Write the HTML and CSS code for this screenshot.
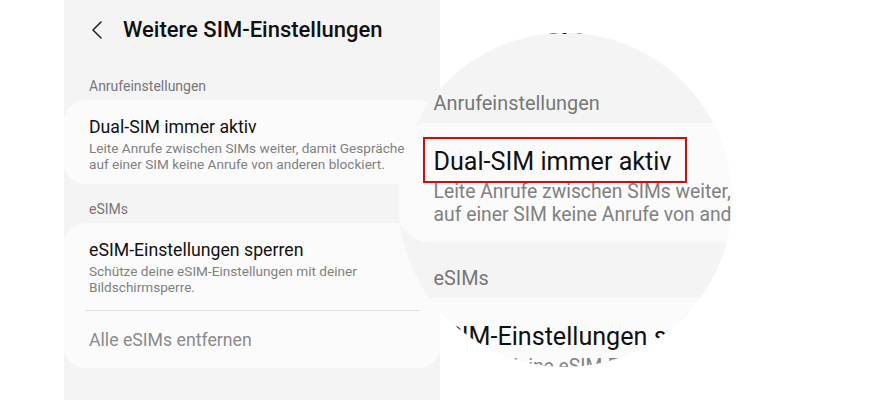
FILE: index.html
```html
<!DOCTYPE html>
<html lang="de">
<head>
<meta charset="utf-8">
<title>Weitere SIM-Einstellungen</title>
<link rel="stylesheet" href="styles.css">
</head>
<body>
<div class="stage">
  <div class="panel">
    <header class="appbar">
      <svg class="back" width="12" height="18" viewBox="0 0 12 18"><path d="M10 1 L2 9 L10 17" fill="none" stroke="#222" stroke-width="1.6" stroke-linecap="round" stroke-linejoin="round"/></svg>
      <h1 class="title">Weitere SIM-Einstellungen</h1>
    </header>
    <div class="section-label">Anrufeinstellungen</div>
    <div class="card">
      <div class="item">
        <div class="item-title">Dual-SIM immer aktiv</div>
        <div class="item-sub">Leite Anrufe zwischen SIMs weiter, damit Gespräche<br>auf einer SIM keine Anrufe von anderen blockiert.</div>
      </div>
    </div>
    <div class="section-label second">eSIMs</div>
    <div class="card">
      <div class="item item-divided">
        <div class="item-title">eSIM-Einstellungen sperren</div>
        <div class="item-sub">Schütze deine eSIM-Einstellungen mit deiner<br>Bildschirmsperre.</div>
      </div>
      <div class="divider"></div>
      <div class="item item-last">
        <div class="item-title disabled">Alle eSIMs entfernen</div>
      </div>
    </div>
  </div>

  <div class="magnifier" aria-hidden="true">
    <div class="panel zoomed">
      <header class="appbar">
        <svg class="back" width="12" height="18" viewBox="0 0 12 18"><path d="M10 1 L2 9 L10 17" fill="none" stroke="#222" stroke-width="1.6" stroke-linecap="round" stroke-linejoin="round"/></svg>
        <div class="title">Weitere SIM-Einstellungen</div>
      </header>
      <div class="section-label">Anrufeinstellungen</div>
      <div class="card">
        <div class="item">
          <div class="item-title">Dual-SIM immer aktiv</div>
          <div class="item-sub">Leite Anrufe zwischen SIMs weiter, damit Gespräche<br>auf einer SIM keine Anrufe von anderen blockiert.</div>
        </div>
      </div>
      <div class="section-label second">eSIMs</div>
      <div class="card">
        <div class="item item-divided">
          <div class="item-title">eSIM-Einstellungen sperren</div>
          <div class="item-sub">Schütze deine eSIM-Einstellungen mit deiner<br>Bildschirmsperre.</div>
        </div>
        <div class="divider"></div>
        <div class="item item-last">
          <div class="item-title disabled">Alle eSIMs entfernen</div>
        </div>
      </div>
    </div>
  </div>

  <div class="highlight"></div>
</div>
</body>
</html>
```

FILE: styles.css
```css
* { box-sizing: border-box; }
html, body { margin: 0; padding: 0; background: #ffffff; }
body { font-family: Roboto, "Noto Sans", "Liberation Sans", sans-serif; }

.stage {
  position: relative;
  width: 879px;
  height: 400px;
  overflow: hidden;
  background: #ffffff;
}

.panel {
  width: 376px;
  height: 400px;
  margin-left: 64px;
  background: #f4f4f4;
  display: flex;
  flex-direction: column;
}

.appbar {
  height: 60px;
  display: flex;
  align-items: center;
  padding-left: 27px;
}
.back { flex: none; margin-right: 20px; }
.title {
  margin: 0;
  font-size: 22px;
  font-weight: 500;
  color: #111111;
  line-height: 28px;
  white-space: nowrap;
}

.section-label {
  margin-top: 18px;
  padding-left: 25px;
  font-size: 14px;
  line-height: 16px;
  color: #777777;
  margin-bottom: 6px;
  white-space: nowrap;
}
.section-label.second { margin-top: 17px; }

.card {
  background: #fbfbfb;
  border-radius: 22px;
}

.item { padding: 16px 10px 12px 25px; }
.item-divided { padding-bottom: 15px; }
.item-last { padding-top: 18px; padding-bottom: 17px; }

.item-title {
  font-size: 17.7px;
  line-height: 22px;
  color: #111111;
  white-space: nowrap;
}
.item-title.disabled { color: #8a8a8a; }

.item-sub {
  margin-top: 2px;
  font-size: 13.6px;
  line-height: 16px;
  color: #808080;
  white-space: nowrap;
}

.divider {
  height: 1px;
  margin: 0 20px 0 21px;
  background: #e2e2e2;
}

/* magnifier lens over the screenshot */
.magnifier {
  position: absolute;
  left: 398px;
  top: 33px;
  width: 334px;
  height: 334px;
  border-radius: 50%;
  overflow: hidden;
  background: #f4f4f4;
}
.zoomed {
  position: absolute;
  left: -64.5px;
  top: -51.6px;
  transform-origin: 0 0;
  transform: scale(1.42);
}

.highlight {
  position: absolute;
  left: 423px;
  top: 137px;
  width: 264px;
  height: 46px;
  border: 2px solid #e10600;
}
```
